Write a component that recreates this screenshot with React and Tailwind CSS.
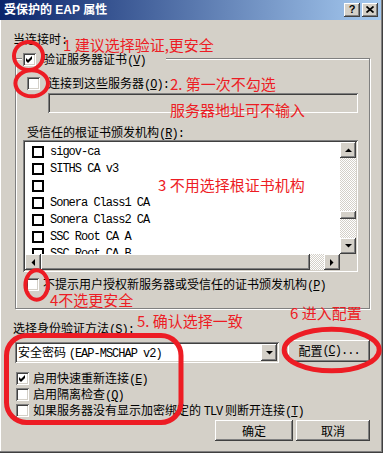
import React from "react";

const RAISED =
  "shadow-[inset_-1px_-1px_0_#404040,inset_1px_1px_0_#ffffff,inset_-2px_-2px_0_#808080,inset_2px_2px_0_#d4d0c8]";
const SUNKEN =
  "shadow-[inset_1px_1px_0_#808080,inset_-1px_-1px_0_#ffffff,inset_2px_2px_0_#404040,inset_-2px_-2px_0_#d4d0c8]";
const MONO = "font-['Liberation_Mono',monospace] tracking-[-1px]";
const DITHER =
  "bg-[repeating-conic-gradient(#ffffff_0%_25%,#d4d0c8_0%_50%)] bg-[length:2px_2px]";

function M({ children }) {
  return <span className={MONO}>{children}</span>;
}

function Key({ k, tail = "" }) {
  return (
    <span className={MONO}>
      (<span className="underline underline-offset-[1px]">{k}</span>){tail}
    </span>
  );
}

function CheckBox({ checked }) {
  return (
    <div className={`w-[13px] h-[13px] shrink-0 bg-white relative ${SUNKEN}`}>
      {checked && (
        <svg className="absolute left-0 top-0" width="13" height="13" viewBox="0 0 13 13">
          <path d="M3 5 L5 7 L9 3 L9 6 L5 10 L3 8 Z" fill="#000" />
        </svg>
      )}
    </div>
  );
}

function Arrow({ dir }) {
  if (dir === "up")
    return (
      <svg width="7" height="4" viewBox="0 0 7 4">
        <polygon points="0,4 7,4 3.5,0.5" fill="#000" />
      </svg>
    );
  if (dir === "down")
    return (
      <svg width="7" height="4" viewBox="0 0 7 4">
        <polygon points="0,0 7,0 3.5,3.5" fill="#000" />
      </svg>
    );
  if (dir === "left")
    return (
      <svg width="4" height="7" viewBox="0 0 4 7">
        <polygon points="4,0 4,7 0.5,3.5" fill="#000" />
      </svg>
    );
  return (
    <svg width="4" height="7" viewBox="0 0 4 7">
      <polygon points="0,0 0,7 3.5,3.5" fill="#000" />
    </svg>
  );
}

function ScrollBtn({ dir }) {
  return (
    <div className={`w-[16px] h-[16px] shrink-0 bg-[#d4d0c8] ${RAISED} flex items-center justify-center`}>
      <Arrow dir={dir} />
    </div>
  );
}

const ITEMS = ["sigov-ca", "SITHS CA v3", "", "Sonera Class1 CA", "Sonera Class2 CA", "SSC Root CA A", "SSC Root CA B"];

export default function App() {
  return (
    <div className="w-[383px] h-[453px] relative overflow-hidden bg-[#d4d0c8] text-black text-[12px] leading-[12px] font-['Noto_Sans_CJK_SC',sans-serif] shadow-[inset_-1px_-1px_0_#404040,inset_-2px_-2px_0_#808080,inset_1px_0_0_#ffffff]">
      {/* title bar */}
      <div className="h-[20px] mr-[2px] flex items-center justify-between bg-[linear-gradient(to_right,#0a246a,#a6caf0)] pl-[4px] pr-[3px]">
        <span className="text-white font-bold text-[12px] leading-[14px] font-['Liberation_Sans','Noto_Sans_CJK_SC',sans-serif] whitespace-nowrap">
          受保护的 EAP 属性
        </span>
        <div className="flex gap-[2px]">
          <div className={`w-[16px] h-[14px] bg-[#d4d0c8] ${RAISED} flex items-center justify-center font-['Liberation_Sans',sans-serif] font-bold text-[11px] leading-[11px] pb-[1px]`}>
            ?
          </div>
          <div className={`w-[16px] h-[14px] bg-[#d4d0c8] ${RAISED} flex items-center justify-center pb-[1px]`}>
            <svg width="8" height="7" viewBox="0 0 8 7">
              <path d="M0.5 0.5 L7.5 6.5 M7.5 0.5 L0.5 6.5" stroke="#000" strokeWidth="1.7" />
            </svg>
          </div>
        </div>
      </div>

      {/* body */}
      <div className="flex flex-col pl-[13px] pr-[13px]">
        <div className="mt-[13px] h-[12px] whitespace-nowrap">
          当连接时<M>:</M>
        </div>

        {/* group box */}
        <div className="mt-[13px] ml-[2px] w-[355px] h-[251px] border border-[#808080] shadow-[1px_1px_0_#ffffff,inset_1px_1px_0_#ffffff] flex flex-col">
          {/* legend */}
          <div className="-mt-[6px] ml-[6px] w-[144px] h-[13px] bg-[#d4d0c8] flex items-center gap-[7px] pl-[1px] whitespace-nowrap">
            <CheckBox checked />
            <span>
              验证服务器证书<Key k="V" />
            </span>
          </div>

          <div className="mt-[11px] ml-[11px] h-[13px] flex items-center gap-[8px] whitespace-nowrap">
            <CheckBox />
            <span>
              连接到这些服务器<Key k="O" tail=":" />
            </span>
          </div>

          <div className={`mt-[3px] ml-[32px] w-[310px] h-[20px] bg-[#d4d0c8] ${SUNKEN}`} />

          <div className="mt-[13px] ml-[11px] h-[12px] whitespace-nowrap">
            受信任的根证书颁发机构<Key k="R" tail=":" />
          </div>

          {/* list box */}
          <div className={`mt-[2px] ml-[7px] w-[335px] h-[132px] bg-white ${SUNKEN} p-[2px] flex flex-col`}>
            <div className="flex flex-1 min-h-0">
              <div className="flex-1 overflow-hidden flex flex-col pt-[1px]">
                {ITEMS.map((t, i) => (
                  <div key={i} className="h-[17px] shrink-0 flex items-center pl-[7px] gap-[6px] whitespace-nowrap">
                    <div className="w-[12px] h-[12px] border-2 border-black bg-white shrink-0" />
                    <span className={MONO}>{t}</span>
                  </div>
                ))}
              </div>
              <div className="w-[16px] flex flex-col shrink-0">
                <ScrollBtn dir="up" />
                <div className={`flex-1 flex flex-col ${DITHER}`}>
                  <div className="h-[53px] shrink-0" />
                  <div className={`h-[8px] shrink-0 bg-[#d4d0c8] ${RAISED}`} />
                </div>
                <ScrollBtn dir="down" />
              </div>
            </div>
            <div className="flex h-[16px] shrink-0">
              <ScrollBtn dir="left" />
              <div className={`flex-1 flex ${DITHER}`}>
                <div className={`w-[269px] h-[16px] bg-[#d4d0c8] ${RAISED}`} />
              </div>
              <ScrollBtn dir="right" />
              <div className="w-[16px] h-[16px] bg-[#d4d0c8]" />
            </div>
          </div>

          <div className="mt-[6px] ml-[10px] h-[13px] flex items-center gap-[4px] whitespace-nowrap">
            <CheckBox />
            <span>
              不提示用户授权新服务器或受信任的证书颁发机构<Key k="P" />
            </span>
          </div>
        </div>

        <div className="mt-[13px] h-[12px] whitespace-nowrap">
          选择身份验证方法<Key k="S" tail=":" />
        </div>

        <div className="mt-[6px] flex items-start">
          <div className={`mt-[2px] ml-[2px] w-[264px] h-[21px] bg-white ${SUNKEN} flex items-center justify-between p-[2px]`}>
            <span className="pl-[1px] whitespace-nowrap">
              安全密码 <M>(EAP-MSCHAP v2)</M>
            </span>
            <div className={`w-[16px] h-[17px] bg-[#d4d0c8] ${RAISED} flex items-center justify-center`}>
              <Arrow dir="down" />
            </div>
          </div>
          <div className={`ml-[9px] w-[82px] h-[22px] bg-[#d4d0c8] ${RAISED} flex items-center justify-center whitespace-nowrap`}>
            配置<Key k="C" tail="..." />
          </div>
        </div>

        <div className="mt-[9px] ml-[3px] flex flex-col gap-[3px]">
          <div className="h-[13px] flex items-center gap-[4px] whitespace-nowrap">
            <CheckBox checked />
            <span>
              启用快速重新连接<Key k="E" />
            </span>
          </div>
          <div className="h-[13px] flex items-center gap-[4px] whitespace-nowrap">
            <CheckBox />
            <span>
              启用隔离检查<Key k="Q" />
            </span>
          </div>
          <div className="h-[13px] flex items-center gap-[4px] whitespace-nowrap">
            <CheckBox />
            <span>
              如果服务器没有显示加密绑定的 <M>TLV</M> 则断开连接<Key k="T" />
            </span>
          </div>
        </div>

        <div className="mt-[3px] flex justify-end gap-[3px]">
          <div className={`w-[78px] h-[21px] bg-[#d4d0c8] ${RAISED} flex items-center justify-center`}>确定</div>
          <div className={`w-[74px] h-[21px] bg-[#d4d0c8] ${RAISED} flex items-center justify-center`}>取消</div>
        </div>
      </div>

      {/* red annotations */}
      <svg className="absolute left-0 top-0 pointer-events-none" width="383" height="453" viewBox="0 0 383 453">
        <g fill="none" stroke="#ed1c24" strokeWidth="4">
          <ellipse cx="28.5" cy="56" rx="14.5" ry="14" />
          <ellipse cx="31.7" cy="83.3" rx="16.3" ry="13" />
          <ellipse cx="36.7" cy="285" rx="11.3" ry="14.7" />
          <rect x="6.5" y="335.5" width="174.5" height="87" rx="20" strokeWidth="5" />
          <ellipse cx="331.7" cy="350" rx="47.5" ry="20.8" strokeWidth="5" />
        </g>
      </svg>
      <div className="absolute left-[63px] top-[37px] text-[15px] leading-[15px] text-[#ed1c24] whitespace-nowrap">1 建议选择验证,更安全</div>
      <div className="absolute left-[170px] top-[76px] text-[15px] leading-[15px] text-[#ed1c24] whitespace-nowrap">2. 第一次不勾选</div>
      <div className="absolute left-[170px] top-[102px] text-[15px] leading-[15px] text-[#ed1c24] whitespace-nowrap">服务器地址可不输入</div>
      <div className="absolute left-[158px] top-[177px] text-[15px] leading-[15px] text-[#ed1c24] whitespace-nowrap">3 不用选择根证书机构</div>
      <div className="absolute left-[50px] top-[292px] text-[15px] leading-[15px] text-[#ed1c24] whitespace-nowrap">4不选更安全</div>
      <div className="absolute left-[137px] top-[313px] text-[15px] leading-[15px] text-[#ed1c24] whitespace-nowrap">5. 确认选择一致</div>
      <div className="absolute left-[290px] top-[305px] text-[15px] leading-[15px] text-[#ed1c24] whitespace-nowrap">6 进入配置</div>
    </div>
  );
}
